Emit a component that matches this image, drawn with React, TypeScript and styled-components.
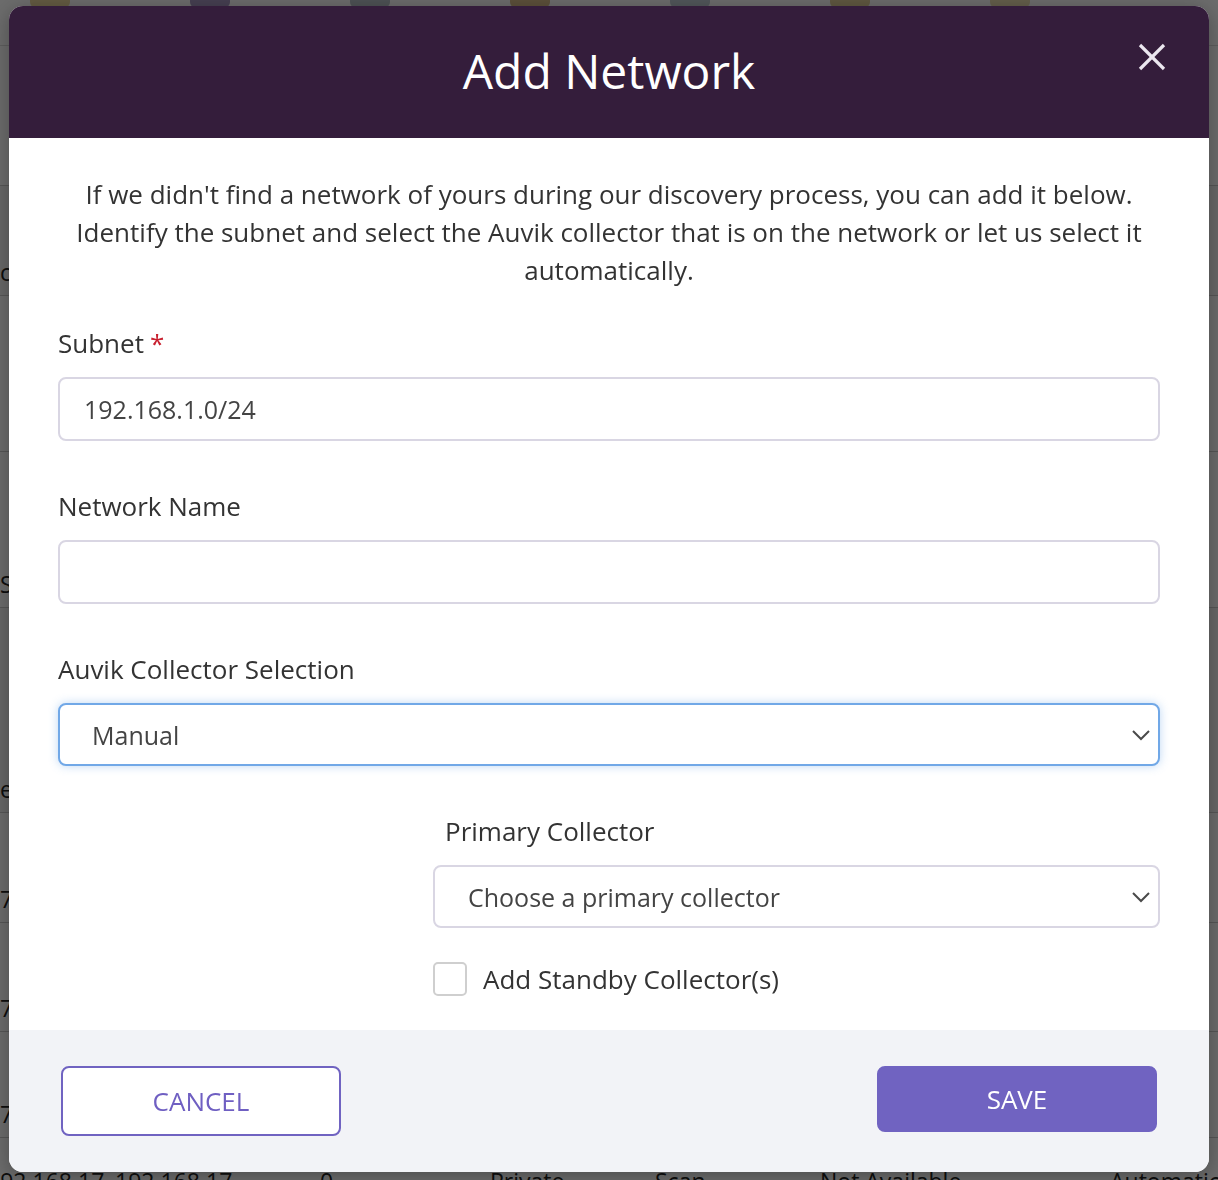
import React from "react";
import styled, { createGlobalStyle } from "styled-components";

const GlobalStyle = createGlobalStyle`
  html, body { margin: 0; padding: 0; }
  body {
    font-family: "Open Sans", "Noto Sans", Arial, sans-serif;
    background: #ffffff;
    width: 1218px;
    height: 1180px;
    overflow: hidden;
  }
  * { box-sizing: border-box; }
`;

/* ---------- background page (dimmed) ---------- */
const Page = styled.div`
  width: 1218px;
  height: 1180px;
  background: #ffffff;
  display: flex;
  flex-direction: column;
  overflow: hidden;
`;

const TopBar = styled.div`
  height: 46px;
  flex: none;
  display: flex;
  align-items: flex-start;
  gap: 120px;
  padding-left: 30px;
  border-bottom: 1px solid #ddd;
`;

const TopIcon = styled.div<{ $c: string }>`
  width: 40px;
  height: 8px;
  background: ${(p) => p.$c};
  opacity: 0.55;
  border-radius: 0 0 6px 6px;
`;

const TableRow = styled.div<{ $h: number; $shade?: boolean; $top?: boolean }>`
  height: ${(p) => p.$h}px;
  flex: none;
  display: grid;
  grid-template-columns: 115px 205px 170px 165px 165px 290px 1fr;
  align-items: ${(p) => (p.$top ? "start" : "end")};
  padding-top: ${(p) => (p.$top ? 28 : 0)}px;
  border-bottom: 1px solid #ccc;
  background: ${(p) => (p.$shade ? "#f4f4f4" : "#ffffff")};
  font-size: 23px;
  color: #222;
`;

const Cell = styled.div<{ $shift?: boolean }>`
  white-space: nowrap;
  overflow: hidden;
  line-height: 30px;
  padding-bottom: 8px;
  text-indent: ${(p) => (p.$shift ? -13 : 0)}px;
`;

const Overlay = styled.div`
  position: fixed;
  inset: 0;
  background: rgba(0, 0, 0, 0.58);
`;

/* ---------- modal ---------- */
const Modal = styled.div`
  position: fixed;
  left: 9px;
  top: 6px;
  width: 1200px;
  height: 1166px;
  background: #ffffff;
  border-radius: 14px;
  overflow: hidden;
  display: flex;
  flex-direction: column;
  box-shadow: 0 4px 20px rgba(0, 0, 0, 0.3);
`;

const Header = styled.div`
  height: 132px;
  flex: none;
  background: #341d3b;
  display: flex;
  align-items: center;
  justify-content: center;
  position: relative;
`;

const Title = styled.h1`
  margin: 0;
  font-size: 48px;
  font-weight: 400;
  color: #ffffff;
  line-height: 1;
  padding-bottom: 2px;
`;

const CloseButton = styled.button`
  position: absolute;
  right: 40px;
  top: 34px;
  width: 34px;
  height: 34px;
  padding: 0;
  border: none;
  background: transparent;
  display: flex;
  align-items: center;
  justify-content: center;
  cursor: pointer;
`;

const Body = styled.div`
  flex: 1;
  padding: 37px 49px 0 49px;
  display: flex;
  flex-direction: column;
`;

const Description = styled.p`
  margin: 0;
  font-size: 26px;
  line-height: 38px;
  color: #333333;
  text-align: center;
`;

const Field = styled.div<{ $top: number }>`
  display: flex;
  flex-direction: column;
  margin-top: ${(p) => p.$top}px;
`;

const Label = styled.label<{ $indent?: number }>`
  font-size: 26px;
  line-height: 34px;
  color: #333333;
  margin-bottom: 17px;
  padding-left: ${(p) => p.$indent ?? 0}px;
`;

const Required = styled.span`
  color: #c8202f;
  margin-left: 6px;
`;

const TextInput = styled.input`
  height: 64px;
  width: 100%;
  border: 2px solid #d9d6e3;
  border-radius: 8px;
  padding: 0 24px;
  font-family: "Open Sans", "Noto Sans", Arial, sans-serif;
  font-size: 25px;
  color: #444444;
  background: #ffffff;
  outline: none;
`;

const SelectBox = styled.div<{ $focused?: boolean; $pad: number }>`
  height: 63px;
  width: 100%;
  border: 2px solid ${(p) => (p.$focused ? "#71a8e7" : "#d9d6e3")};
  border-radius: 8px;
  box-shadow: ${(p) => (p.$focused ? "0 0 10px rgba(113, 168, 231, 0.45)" : "none")};
  padding: 0 7px 0 ${(p) => p.$pad}px;
  display: flex;
  align-items: center;
  justify-content: space-between;
  font-size: 25px;
  color: #444444;
  background: #ffffff;
`;

const SubSection = styled.div`
  margin-left: 375px;
  display: flex;
  flex-direction: column;
`;

const CheckRow = styled.label`
  display: flex;
  align-items: center;
  gap: 16px;
  margin-top: 33px;
  font-size: 26px;
  color: #333333;
`;

const CheckBox = styled.span`
  width: 34px;
  height: 34px;
  border: 2px solid #cfcfcf;
  border-radius: 5px;
  background: #ffffff;
  flex: none;
`;

const Footer = styled.div`
  height: 142px;
  flex: none;
  background: #f2f3f7;
  display: flex;
  align-items: flex-start;
  justify-content: space-between;
  padding: 36px 52px 0 52px;
`;

const Button = styled.button<{ $primary?: boolean }>`
  width: 280px;
  height: ${(p) => (p.$primary ? 66 : 70)}px;
  border-radius: 8px;
  border: 2px solid #7063c1;
  background: ${(p) => (p.$primary ? "#7063c1" : "#ffffff")};
  color: ${(p) => (p.$primary ? "#ffffff" : "#6f5fc2")};
  font-family: "Open Sans", "Noto Sans", Arial, sans-serif;
  font-size: 26px;
  font-weight: 400;
  cursor: pointer;
  padding: 0;
`;

const Chevron = () => (
  <svg width="20" height="12" viewBox="0 0 20 12" aria-hidden="true">
    <polyline points="2,2 10,10 18,2" fill="none" stroke="#4a4a4a" strokeWidth="2" />
  </svg>
);

const CloseIcon = () => (
  <svg width="28" height="28" viewBox="0 0 28 28" aria-hidden="true">
    <line x1="2" y1="2" x2="26" y2="26" stroke="#ece8f0" strokeWidth="3.2" />
    <line x1="26" y1="2" x2="2" y2="26" stroke="#ece8f0" strokeWidth="3.2" />
  </svg>
);

const rows = [
  { h: 140, shade: false, c: ["", "", "", "", "", "", ""] },
  { h: 110, shade: true, c: ["ca", "", "", "", "", "", "nt"] },
  { h: 156, shade: false, c: ["", "", "", "", "", "", ""] },
  { h: 156, shade: false, c: ["Se", "", "", "", "", "", ""] },
  { h: 205, shade: true, c: ["ea", "", "", "", "", "", "Cti"] },
  { h: 110, shade: false, c: ["70/", "", "", "", "", "", "m"] },
  { h: 109, shade: false, c: ["70/", "", "", "", "", "", "Pr"] },
  { h: 106, shade: false, c: ["70/", "", "", "", "", "", "Pr"] },
];

const lastRow = ["192.168.17", "192.168.17", "0", "Private", "Scan", "Not Available", "Automatic"];

export default function App() {
  return (
    <>
      <GlobalStyle />
      <Page aria-hidden="true">
        <TopBar>
          <TopIcon $c="#d8b64a" />
          <TopIcon $c="#5b3f8c" />
          <TopIcon $c="#7a8c99" />
          <TopIcon $c="#b9862a" />
          <TopIcon $c="#8aa0b0" />
          <TopIcon $c="#c7a844" />
          <TopIcon $c="#d8c270" />
        </TopBar>
        {rows.map((r, i) => (
          <TableRow key={i} $h={r.h} $shade={r.shade}>
            {r.c.map((t, j) => (
              <Cell key={j}>{t}</Cell>
            ))}
          </TableRow>
        ))}
        <TableRow $h={80} $top>
          {lastRow.map((t, j) => (
            <Cell key={j} $shift={j === 0}>
              {t}
            </Cell>
          ))}
        </TableRow>
      </Page>
      <Overlay />
      <Modal role="dialog" aria-label="Add Network">
        <Header>
          <Title>Add Network</Title>
          <CloseButton aria-label="Close">
            <CloseIcon />
          </CloseButton>
        </Header>
        <Body>
          <Description>
            If we didn't find a network of yours during our discovery process, you can add it below.
            <br />
            Identify the subnet and select the Auvik collector that is on the network or let us select it
            automatically.
          </Description>

          <Field $top={37}>
            <Label>
              Subnet<Required>*</Required>
            </Label>
            <TextInput defaultValue="192.168.1.0/24" />
          </Field>

          <Field $top={48}>
            <Label>Network Name</Label>
            <TextInput defaultValue="" />
          </Field>

          <Field $top={48}>
            <Label>Auvik Collector Selection</Label>
            <SelectBox $focused $pad={32}>
              <span>Manual</span>
              <Chevron />
            </SelectBox>
          </Field>

          <SubSection>
            <Field $top={48}>
              <Label $indent={12}>Primary Collector</Label>
              <SelectBox $pad={33}>
                <span>Choose a primary collector</span>
                <Chevron />
              </SelectBox>
            </Field>
            <CheckRow>
              <CheckBox />
              Add Standby Collector(s)
            </CheckRow>
          </SubSection>
        </Body>
        <Footer>
          <Button>CANCEL</Button>
          <Button $primary>SAVE</Button>
        </Footer>
      </Modal>
    </>
  );
}
